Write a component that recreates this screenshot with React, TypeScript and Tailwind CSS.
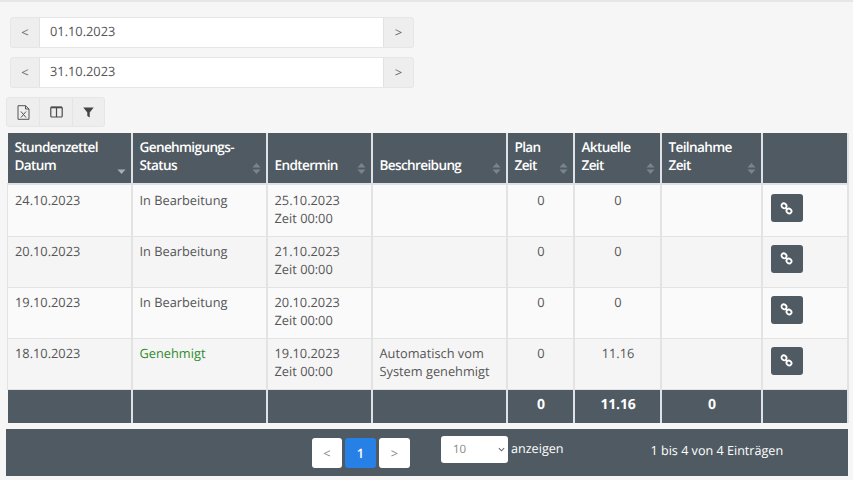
import React from "react";

function DateRow({ value, mt }: { value: string; mt: string }) {
  return (
    <div className={`flex h-[31px] w-[404px] ml-[10px] ${mt} rounded-[3px] bg-[#eeeeee] border border-[#e6e6e6]`}>
      <div className="w-[28px] flex items-center justify-center pb-[2px] text-[13px] text-[#666]">&lt;</div>
      <div className="w-[345px] bg-white border-x border-[#e2e2e2] pl-[10px] pb-[3px] flex items-center text-[12.8px] text-[#555]">{value}</div>
      <div className="flex-1 flex items-center justify-center pb-[2px] text-[13px] text-[#666]">&gt;</div>
    </div>
  );
}

function Sort({ active }: { active?: boolean }) {
  return (
    <svg width="9" height="13" viewBox="0 0 9 13" className="absolute right-[5px] bottom-[8px]">
      {!active && <path d="M4.5 1 L8.5 5.5 H0.5 Z" fill="#7b848b" />}
      <path d="M4.5 12 L8.5 7.5 H0.5 Z" fill={active ? "#a9afb4" : "#7b848b"} />
    </svg>
  );
}

function Th({ children, active, sort = true }: { children?: React.ReactNode; active?: boolean; sort?: boolean }) {
  return (
    <th className="relative border-x-2 border-b-[2px] border-[#dee2e6] bg-[#505a62] px-[7px] pb-[9px] pt-[4px] align-bottom text-left text-[13.6px] tracking-[-0.65px] leading-[18px] font-semibold text-white first:border-l-0">
      {children}
      {sort && <Sort active={active} />}
    </th>
  );
}

function LinkIcon() {
  return (
    <svg width="13" height="13" viewBox="0 0 13 13" fill="none" stroke="#fff" strokeWidth="1.8">
      <ellipse cx="4" cy="3.8" rx="2.6" ry="2.3" transform="rotate(40 4 3.8)" />
      <ellipse cx="9" cy="9" rx="2.6" ry="2.3" transform="rotate(40 9 9)" />
      <path d="M5.5 5.5 L7.5 7.5" />
    </svg>
  );
}

const rows = [
  { d: "24.10.2023", s: "In Bearbeitung", e: "25.10.2023", b: null, p: "0", a: "0", h: "h-[52px]", bg: "bg-[#fafafa]", pt: "pt-[6px]", bt: "pt-[9px]" },
  { d: "20.10.2023", s: "In Bearbeitung", e: "21.10.2023", b: null, p: "0", a: "0", h: "h-[51px]", bg: "bg-[#f5f5f5]", pt: "pt-[5px]", bt: "pt-[8px]" },
  { d: "19.10.2023", s: "In Bearbeitung", e: "20.10.2023", b: null, p: "0", a: "0", h: "h-[51px]", bg: "bg-[#fafafa]", pt: "pt-[5px]", bt: "pt-[8px]" },
  { d: "18.10.2023", s: "Genehmigt", e: "19.10.2023", b: ["Automatisch vom", "System genehmigt"], p: "0", a: "11.16", h: "h-[51px]", bg: "bg-[#f5f5f5]", pt: "pt-[5px]", bt: "pt-[8px]" },
];

const td = "border-x-2 border-b border-[#e3e3e3] px-[7px] align-top first:border-l";
const tf = "border-x-2 border-[#dee2e6] bg-[#505a62] pb-[3px] pl-[8px] pr-[6px] text-center text-[14px] tracking-[-0.2px] font-bold text-white h-[34px] first:border-l-0";

export default function App() {
  return (
    <div className="w-[853px] h-[480px] overflow-hidden bg-[#f6f6f6] border-t-2 border-[#e6e6e6] font-['Open_Sans',sans-serif] [text-rendering:geometricPrecision] text-[12.8px] leading-[18px] text-[#555]">
      <DateRow value="01.10.2023" mt="mt-[15px]" />
      <DateRow value="31.10.2023" mt="mt-[9px]" />
      <div className="ml-[6px] mt-[9px] flex h-[30px] w-[99px] rounded-[3px] bg-[#eeeeee] border border-[#e6e6e6] text-[#444]">
        <div className="w-[33px] flex items-center justify-center border-r border-[#e4e4e4]">
          <svg width="13" height="15" viewBox="0 0 13 15" fill="none" stroke="#555" strokeWidth="1">
            <path d="M1 .7 H8.5 L12 4 V14.3 H1 Z M8.5 .7 V4 H12" />
            <path d="M4 6.5 L9 12.5 M9 6.5 L4 12.5" />
          </svg>
        </div>
        <div className="w-[33px] flex items-center justify-center border-r border-[#e4e4e4]">
          <svg width="13" height="12" viewBox="0 0 13 12" fill="none" stroke="#4b4b4b" strokeWidth="1.2">
            <rect x="0.8" y="1" width="11.4" height="10" rx="1" />
            <path d="M6.5 1 V11" />
            <path d="M1 1.5 H12" strokeWidth="1.6" />
          </svg>
        </div>
        <div className="flex-1 flex items-center justify-center">
          <svg width="11" height="11" viewBox="0 0 11 11" fill="#444">
            <path d="M0.3 0.5 H10.7 L6.7 5.5 V10.5 L4.3 9 V5.5 Z" />
          </svg>
        </div>
      </div>
      <table className="ml-[7px] mt-[6px] w-[840px] table-fixed border-collapse">
        <colgroup>
          <col className="w-[124px]" />
          <col className="w-[135px]" />
          <col className="w-[105px]" />
          <col className="w-[135px]" />
          <col className="w-[67px]" />
          <col className="w-[87px]" />
          <col className="w-[101px]" />
          <col className="w-[86px]" />
        </colgroup>
        <thead>
          <tr className="h-[51px]">
            <Th active>Stundenzettel<br />Datum</Th>
            <Th>Genehmigungs-<br />Status</Th>
            <Th>Endtermin</Th>
            <Th>Beschreibung</Th>
            <Th>Plan<br />Zeit</Th>
            <Th>Aktuelle<br />Zeit</Th>
            <Th>Teilnahme<br />Zeit</Th>
            <Th sort={false} />
          </tr>
        </thead>
        <tbody>
          {rows.map((r) => (
            <tr key={r.d} className={`${r.h} ${r.bg}`}>
              <td className={`${td} ${r.pt}`}>{r.d}</td>
              <td className={`${td} ${r.pt} ${r.s === "Genehmigt" ? "text-[#2e8b2e]" : ""}`}>{r.s}</td>
              <td className={`${td} ${r.pt}`}>{r.e}<br />Zeit 00:00</td>
              <td className={`${td} ${r.pt}`}>{r.b && <>{r.b[0]}<br />{r.b[1]}</>}</td>
              <td className={`${td} ${r.pt} pl-[8px] pr-[6px] text-center`}>{r.p}</td>
              <td className={`${td} ${r.pt} pl-[8px] pr-[6px] text-center`}>{r.a}</td>
              <td className={td}></td>
              <td className={`${td} ${r.bt} pl-[8px]`}>
                <div className="flex h-[28px] w-[32px] items-center justify-center rounded-[3px] bg-[#505a62]">
                  <LinkIcon />
                </div>
              </td>
            </tr>
          ))}
        </tbody>
        <tfoot>
          <tr>
            <td className={tf}></td>
            <td className={tf}></td>
            <td className={tf}></td>
            <td className={tf}></td>
            <td className={tf}>0</td>
            <td className={tf}>11.16</td>
            <td className={tf}>0</td>
            <td className={tf}></td>
          </tr>
        </tfoot>
      </table>
      <div className="ml-[6px] mt-[6px] flex h-[47px] w-[842px] items-start bg-[#505a62] text-white">
        <div className="ml-[306px] mt-[9px] flex gap-[3px]">
          <div className="flex h-[30px] w-[30px] items-center justify-center rounded-[3px] bg-white text-[#888]">&lt;</div>
          <div className="flex h-[30px] w-[31px] items-center justify-center rounded-[3px] bg-[#2680e6] font-semibold text-white">1</div>
          <div className="flex h-[30px] w-[31px] items-center justify-center rounded-[3px] bg-white text-[#888]">&gt;</div>
        </div>
        <div className="ml-[31px] mt-[7px] flex h-[27px] w-[67px] items-center justify-between rounded-[3px] bg-white pl-[12px] pr-[3px] text-[11.5px] text-[#888]">
          <span>10</span>
          <svg width="7" height="5" viewBox="0 0 8 5" fill="none" stroke="#666" strokeWidth="1.2"><path d="M1 1 L4 4 L7 1" /></svg>
        </div>
        <span className="ml-[3px] mt-[11px] text-[12.6px]">anzeigen</span>
        <span className="ml-[87px] mt-[13px] text-[12.6px]">1 bis 4 von 4 Einträgen</span>
      </div>
    </div>
  );
}
